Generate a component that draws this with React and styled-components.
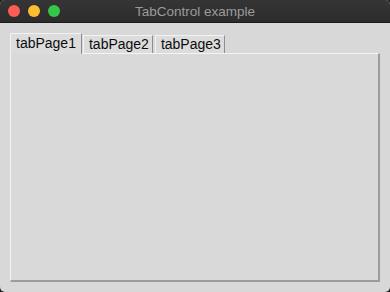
import React, { useState } from "react";
import styled, { createGlobalStyle } from "styled-components";

const Global = createGlobalStyle`
  html, body { margin: 0; padding: 0; background: #1e1e1e; }
  body { font-family: "Liberation Sans", Arial, sans-serif; }
`;

const Window = styled.div`
  width: 390px;
  height: 292px;
  display: flex;
  flex-direction: column;
  background: #d8d8d8;
  border-radius: 5px;
  overflow: hidden;
`;

const TitleBar = styled.div`
  height: 22px;
  flex: none;
  position: relative;
  display: flex;
  align-items: center;
  justify-content: center;
  background: linear-gradient(#353535, #2c2c2c);
  border-bottom: 1px solid #1a1a1a;
  color: #9b9b9b;
  font-size: 13.5px;
`;

const Lights = styled.div`
  position: absolute;
  left: 8px;
  top: 5px;
  display: flex;
  gap: 8px;
`;

const Light = styled.span`
  width: 12px;
  height: 12px;
  border-radius: 50%;
  background: ${p => p.color};
`;

const Body = styled.div`
  flex: 1;
  display: flex;
  flex-direction: column;
  padding: 9px 10px 10px 10px;
`;

const TabStrip = styled.div`
  display: flex;
  align-items: flex-end;
  height: 21px;
  position: relative;
  z-index: 1;
`;

const Tab = styled.div`
  box-sizing: border-box;
  height: ${p => (p.selected ? "21px" : "18px")};
  margin-right: ${p => (p.selected ? "1px" : "2px")};
  margin-bottom: ${p => (p.selected ? "-1px" : "0")};
  padding: ${p => (p.selected ? "1px 5px 0 5px" : "0 3px 0 5px")};
  display: flex;
  align-items: ${p => (p.selected ? "flex-start" : "center")};
  font-size: 14px;
  line-height: 17px;
  color: #0c0c0c;
  background: #dcdcdc;
  border-top: 1px solid #f2f2f2;
  border-left: 1px solid #f2f2f2;
  border-right: 1px solid #8f8f8f;
`;

const Pane = styled.div`
  flex: 1;
  box-sizing: border-box;
  background: #d9d9d9;
  border-top: 1px solid #f4f4f4;
  border-left: 1px solid #f4f4f4;
  border-right: 2px solid #9c9c9c;
  border-bottom: 2px solid #9c9c9c;
`;

const tabs = ["tabPage1", "tabPage2", "tabPage3"];

export default function App() {
  const [active, setActive] = useState(0);
  return (
    <>
      <Global />
      <Window>
        <TitleBar>
          <Lights>
            <Light color="#fd5d55" />
            <Light color="#fcbd2e" />
            <Light color="#35c848" />
          </Lights>
          TabControl example
        </TitleBar>
        <Body>
          <TabStrip>
            {tabs.map((t, i) => (
              <Tab key={t} selected={i === active} onClick={() => setActive(i)}>
                {t}
              </Tab>
            ))}
          </TabStrip>
          <Pane />
        </Body>
      </Window>
    </>
  );
}
